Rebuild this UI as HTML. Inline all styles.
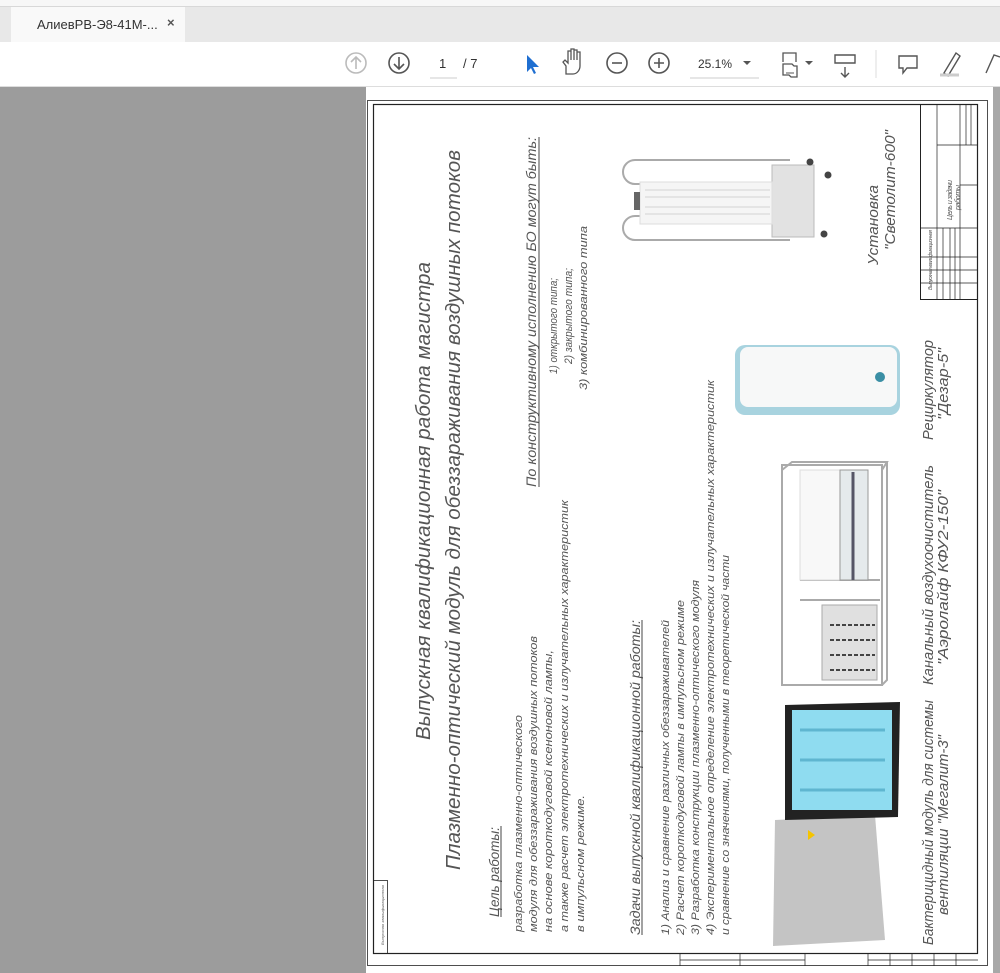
<!DOCTYPE html>
<html><head><meta charset="utf-8"><style>
*{margin:0;padding:0;box-sizing:border-box}
body{width:1000px;height:973px;overflow:hidden;background:#fff;font-family:"Liberation Sans",sans-serif;position:relative}
.abs{position:absolute}
</style></head><body>
<div class="abs" style="left:0;top:0;width:1000px;height:6px;background:#f7f7f7"></div>
<div class="abs" style="left:0;top:6px;width:1000px;height:36px;background:#e8e8e8;border-top:1px solid #d8d8d8"></div>
<div class="abs" style="left:11px;top:7px;width:174px;height:35px;background:#f9f9f9"></div>
<div class="abs" style="left:37px;top:17px;font-size:13px;color:#333">АлиевРВ-Э8-41М-...</div>
<div class="abs" style="left:167px;top:15px;font-size:13px;color:#555;font-weight:bold">×</div>
<div class="abs" style="left:0;top:42px;width:1000px;height:45px;background:#fff;border-bottom:1px solid #ddd"></div>
<svg class="abs" style="left:0;top:42px" width="1000" height="44">
 <g fill="none" stroke-width="1.6">
  <circle cx="356" cy="21" r="10" stroke="#bbb"/><path d="M356 27V15M351 20l5-5 5 5" stroke="#bbb"/>
  <circle cx="399" cy="21" r="10" stroke="#555"/><path d="M399 15v12M394 22l5 5 5-5" stroke="#555"/>
  <circle cx="617" cy="21" r="10" stroke="#555"/><path d="M612 21h10" stroke="#555"/>
  <circle cx="659" cy="21" r="10" stroke="#555"/><path d="M654 21h10M659 16v10" stroke="#555"/>
  <path d="M566 32v-8l-3-4 2-2 3 3v-12h3v9-11h3v11-10h3v10-8h3v14c0 4-3 8-7 8z" stroke="#555" stroke-width="1.3"/>
  <path d="M783 20v-9h13v9M783 28v5h6l2 2h6v-11h-3l-2-2h-9z" stroke="#555" stroke-width="1.3"/>
  <path d="M786 31h8" stroke="#555" stroke-width="1"/>
  <path d="M835 13h20v8h-20z M845 25v10M841 31l4 4 4-4" stroke="#555" stroke-width="1.4"/>
  <path d="M899 14h18v12h-10l-4 5v-5h-4z" stroke="#555" stroke-width="1.4"/>
  <path d="M944 31l12-20 4 3-12 20z" stroke="#555" stroke-width="1.4"/>
  <path d="M986 31l8-18 6 2" stroke="#555" stroke-width="1.4"/>
 </g>
 <path d="M527 13l0 17 4-4 3 6 2-1-3-6 6 0z" fill="#1f6fd1"/>
 <path d="M743 19l4 4 4-4z M805 19l4 4 4-4z" fill="#555"/>
 <path d="M940 33h19" stroke="#ccc" stroke-width="3"/>
 <line x1="876" y1="8" x2="876" y2="36" stroke="#ddd"/>
 <line x1="430" y1="36" x2="457" y2="36" stroke="#ccc"/>
 <line x1="690" y1="36" x2="759" y2="36" stroke="#ccc"/>
 <text x="439" y="26" font-size="13" fill="#333">1</text>
 <text x="463" y="26" font-size="13" fill="#333">/  7</text>
 <text x="698" y="26" font-size="12" fill="#333">25.1%</text>
</svg>
<div class="abs" style="left:0;top:87px;width:366px;height:886px;background:#9c9c9c"></div>
<div class="abs" style="left:993px;top:87px;width:7px;height:886px;background:#a8a8a8"></div>
<svg class="abs" style="left:0;top:0" width="1000" height="973">
 <g fill="none" stroke="#222">
  <rect x="367.5" y="100.5" width="620" height="865" stroke-width="0.8"/>
  <rect x="373.5" y="104.5" width="604" height="849" stroke-width="1.2"/>
  <rect x="373.5" y="880.5" width="14" height="73" stroke-width="0.8"/>
  <rect x="920.5" y="104.5" width="57" height="195" stroke-width="1"/>
  <path d="M937 104v195M960 104v195M920 228h57M920 257h57M920 270h57M920 283h57M943 228v71M950 228v71M955 228v71M960 145h17M960 185h17M966 104v41M971 104v41M937 145h23" stroke-width="0.7"/>
  <path d="M680 953v13M805 953v13M680 960h125M740 953v13M868 953v13M868 960h110M890 953v13M912 953v13M934 953v13M956 953v13" stroke-width="0.7"/>
 </g>
 <g font-family="Liberation Sans, sans-serif" font-style="italic" fill="#555">
  <text transform="translate(430,740) rotate(-90)" font-size="20" textLength="478" lengthAdjust="spacingAndGlyphs">Выпускная квалификационная работа магистра</text>
  <text transform="translate(460,870) rotate(-90)" font-size="20" textLength="720" lengthAdjust="spacingAndGlyphs">Плазменно-оптический модуль для обеззараживания воздушных потоков</text>
  <text transform="translate(536,487) rotate(-90)" font-size="14" textLength="350" lengthAdjust="spacingAndGlyphs">По конструктивному исполнению БО могут быть:</text>
  <text transform="translate(557,374) rotate(-90)" font-size="11" textLength="96" lengthAdjust="spacingAndGlyphs">1) открытого типа;</text>
  <text transform="translate(572,364) rotate(-90)" font-size="11" textLength="96" lengthAdjust="spacingAndGlyphs">2) закрытого типа;</text>
  <text transform="translate(587,390) rotate(-90)" font-size="11" textLength="164" lengthAdjust="spacingAndGlyphs">3) комбинированного типа</text>
  <text transform="translate(499,917) rotate(-90)" font-size="14" textLength="90" lengthAdjust="spacingAndGlyphs">Цель работы:</text>
  <text transform="translate(522,932) rotate(-90)" font-size="11" textLength="217" lengthAdjust="spacingAndGlyphs">разработка плазменно-оптического</text>
  <text transform="translate(537,932) rotate(-90)" font-size="11" textLength="296" lengthAdjust="spacingAndGlyphs">модуля для обеззараживания воздушных потоков</text>
  <text transform="translate(552,932) rotate(-90)" font-size="11" textLength="282" lengthAdjust="spacingAndGlyphs">на основе короткодуговой ксеноновой лампы,</text>
  <text transform="translate(568,932) rotate(-90)" font-size="11" textLength="432" lengthAdjust="spacingAndGlyphs">а также расчет электротехнических и излучательных характеристик</text>
  <text transform="translate(584,932) rotate(-90)" font-size="11" textLength="137" lengthAdjust="spacingAndGlyphs">в импульсном режиме.</text>
  <text transform="translate(640,935) rotate(-90)" font-size="14" textLength="315" lengthAdjust="spacingAndGlyphs">Задачи выпускной квалификационной работы:</text>
  <text transform="translate(669,935) rotate(-90)" font-size="11" textLength="315" lengthAdjust="spacingAndGlyphs">1) Анализ и сравнение различных обеззараживателей</text>
  <text transform="translate(684,935) rotate(-90)" font-size="11" textLength="335" lengthAdjust="spacingAndGlyphs">2) Расчет короткодуговой лампы в импульсном режиме</text>
  <text transform="translate(699,935) rotate(-90)" font-size="11" textLength="355" lengthAdjust="spacingAndGlyphs">3) Разработка конструкции плазменно-оптического модуля</text>
  <text transform="translate(714,935) rotate(-90)" font-size="11" textLength="555" lengthAdjust="spacingAndGlyphs">4) Экспериментальное определение электротехнических и  излучательных характеристик</text>
  <text transform="translate(729,935) rotate(-90)" font-size="11" textLength="380" lengthAdjust="spacingAndGlyphs">и сравнение со значениями, полученными в теоретической части</text>
  <text transform="translate(933,945) rotate(-90)" font-size="15" textLength="245" lengthAdjust="spacingAndGlyphs">Бактерицидный модуль для системы</text>
  <text transform="translate(948,915) rotate(-90)" font-size="15" textLength="180" lengthAdjust="spacingAndGlyphs">вентиляции "Мегалит-3"</text>
  <text transform="translate(933,685) rotate(-90)" font-size="15" textLength="220" lengthAdjust="spacingAndGlyphs">Канальный воздухоочиститель</text>
  <text transform="translate(948,665) rotate(-90)" font-size="15" textLength="175" lengthAdjust="spacingAndGlyphs">"Аэролайф КФУ2-150"</text>
  <text transform="translate(933,440) rotate(-90)" font-size="15" textLength="100" lengthAdjust="spacingAndGlyphs">Рециркулятор</text>
  <text transform="translate(948,420) rotate(-90)" font-size="15" textLength="72" lengthAdjust="spacingAndGlyphs">"Дезар-5"</text>
  <text transform="translate(878,265) rotate(-90)" font-size="15" textLength="80" lengthAdjust="spacingAndGlyphs">Установка</text>
  <text transform="translate(895,250) rotate(-90)" font-size="15" textLength="120" lengthAdjust="spacingAndGlyphs">"Светолит-600"</text>
  <text transform="translate(932,290) rotate(-90)" font-size="5" textLength="60">Выпускная квалификационная</text>
  <text transform="translate(952,220) rotate(-90)" font-size="7" textLength="40">Цель и задачи</text>
  <text transform="translate(960,210) rotate(-90)" font-size="7" textLength="25">работы</text>
  <text transform="translate(384,945) rotate(-90)" font-size="4" textLength="60">Выпускная квалификационная</text>
 </g>
 <g stroke="#444" stroke-width="1">
  <line x1="539" y1="137" x2="539" y2="487"/>
  <line x1="501" y1="826" x2="501" y2="917"/>
  <line x1="642" y1="620" x2="642" y2="935"/>
 </g>
 <!-- Svetolit -->
 <g fill="none" stroke="#aaa" stroke-width="2">
  <path d="M790 160H635a12 12 0 0 0 0 24h8"/>
  <path d="M790 240H635a12 12 0 0 1 0-24h8"/>
 </g>
 <rect x="772" y="165" width="42" height="72" fill="#e2e2e2" stroke="#bbb"/>
 <rect x="640" y="182" width="132" height="42" fill="#f5f5f5" stroke="#ddd"/>
 <path d="M645 190h125M645 197h125M645 207h125M645 214h125" stroke="#e4e4e4" stroke-width="2"/>
 <rect x="634" y="192" width="6" height="18" fill="#666"/>
 <circle cx="810" cy="162" r="3.5" fill="#444"/><circle cx="828" cy="175" r="3.5" fill="#444"/><circle cx="824" cy="234" r="3.5" fill="#444"/>
 <!-- Dezar -->
 <rect x="735" y="345" width="165" height="70" rx="10" fill="#a8d3df"/>
 <rect x="740" y="347" width="157" height="60" rx="8" fill="#f7f8f8"/>
 <circle cx="880" cy="377" r="5" fill="#3b8fa5"/>
 <!-- KFU2 -->
 <g fill="none" stroke="#aaa" stroke-width="2">
  <rect x="782" y="465" width="100" height="220"/>
  <path d="M782 470l10-8h95l-5 8M882 685l5-5V462M800 580h80M800 600h80"/>
 </g>
 <rect x="800" y="470" width="40" height="110" fill="#f8f8f8" stroke="#ddd"/>
 <rect x="840" y="470" width="28" height="110" fill="#e5eaec" stroke="#999"/>
 <path d="M853 472v108" stroke="#556" stroke-width="3"/>
 <rect x="822" y="605" width="55" height="75" fill="#e0e0e0" stroke="#aaa"/>
 <path d="M830 625h45M830 640h45M830 655h45M830 670h45" stroke="#444" stroke-width="2" stroke-dasharray="4 2"/>
 <!-- Megalit -->
 <path d="M775 820l100-5 10 125-112 6z" fill="#c4c4c4"/>
 <path d="M785 705l115-3-2 115-113 3z" fill="#222"/>
 <rect x="792" y="710" width="100" height="100" fill="#8fdcf0"/>
 <path d="M800 730h85M800 760h85M800 790h85" stroke="#5fb6d0" stroke-width="3"/>
 <path d="M808 830l7 5-7 5z" fill="#f5c400"/>
</svg>
</body></html>
